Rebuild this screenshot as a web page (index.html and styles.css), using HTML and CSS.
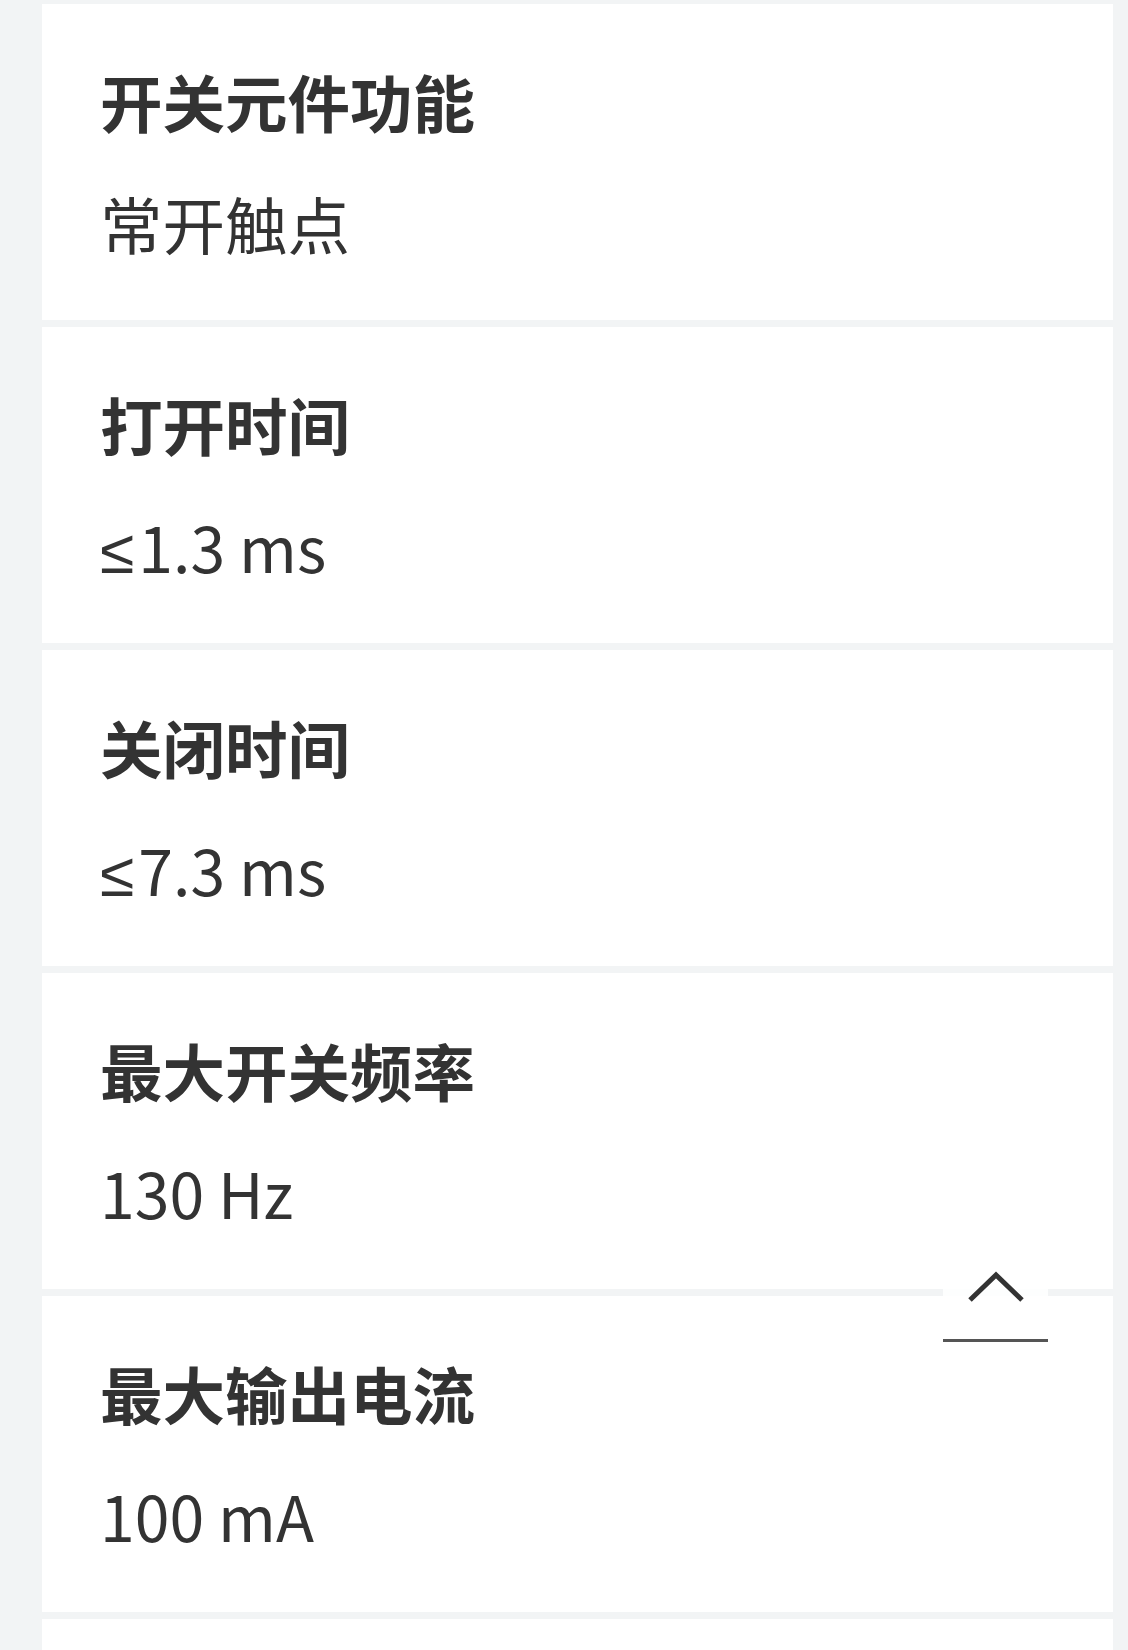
FILE: index.html
```html
<!DOCTYPE html>
<html lang="zh-CN">

<head>
    <meta charset="UTF-8">
    <meta name="viewport" content="width=device-width, initial-scale=1.0">
    <title>技术参数</title>
    <link rel="stylesheet" href="styles.css">
</head>

<body>
    <div class="spec-list">
        <div class="spec-card">
            <div class="spec-title">开关元件功能</div>
            <div class="spec-value">常开触点</div>
        </div>
        <div class="spec-card">
            <div class="spec-title">打开时间</div>
            <div class="spec-value"><span class="sym">≤</span>1.3 ms</div>
        </div>
        <div class="spec-card">
            <div class="spec-title">关闭时间</div>
            <div class="spec-value"><span class="sym">≤</span>7.3 ms</div>
        </div>
        <div class="spec-card">
            <div class="spec-title">最大开关频率</div>
            <div class="spec-value">130 Hz</div>
        </div>
        <div class="spec-card">
            <div class="spec-title">最大输出电流</div>
            <div class="spec-value">100 mA</div>
        </div>
        <!-- next card, scrolled below the fold -->
        <div class="spec-card"></div>
    </div>

    <a class="back-top" href="#">
        <svg class="back-top-icon" width="60" height="40" viewBox="0 0 60 40">
            <path d="M4 35 L30 10 L56 35" fill="none" stroke="#333" stroke-width="5" />
        </svg>
        <span class="back-top-line"></span>
    </a>
</body>

</html>
```

FILE: styles.css
```css
body {
    font-family: "Noto Sans CJK SC", "Noto Sans", sans-serif;
    margin: 0;
    padding: 0;
    background-color: #f2f4f5;
    color: #333;
}

.spec-list {
    display: flex;
    flex-direction: column;
    gap: 7px;
    padding: 4px 15px 0 42px;
}

.spec-card {
    height: 316px;
    flex-shrink: 0;
    box-sizing: border-box;
    padding: 50px 58px 0;
    background: #fff;
}

.spec-title {
    font-size: 62.5px;
    line-height: 93px;
    font-weight: 700;
}

.spec-value {
    margin-top: 29px;
    font-size: 62.5px;
    line-height: 93px;
    font-weight: 400;
}

.sym {
    font-family: "Noto Sans", sans-serif;
    margin-right: 4px;
}

.back-top {
    position: fixed;
    right: 80px;
    bottom: 308px;
    width: 105px;
    height: 92px;
    display: flex;
    flex-direction: column;
    align-items: center;
    background: rgba(255, 255, 255, 0.85);
}

.back-top-icon {
    display: block;
    margin-top: 15px;
}

.back-top-line {
    display: block;
    width: 105px;
    height: 3px;
    margin-top: 34px;
    background: #555;
}
```
